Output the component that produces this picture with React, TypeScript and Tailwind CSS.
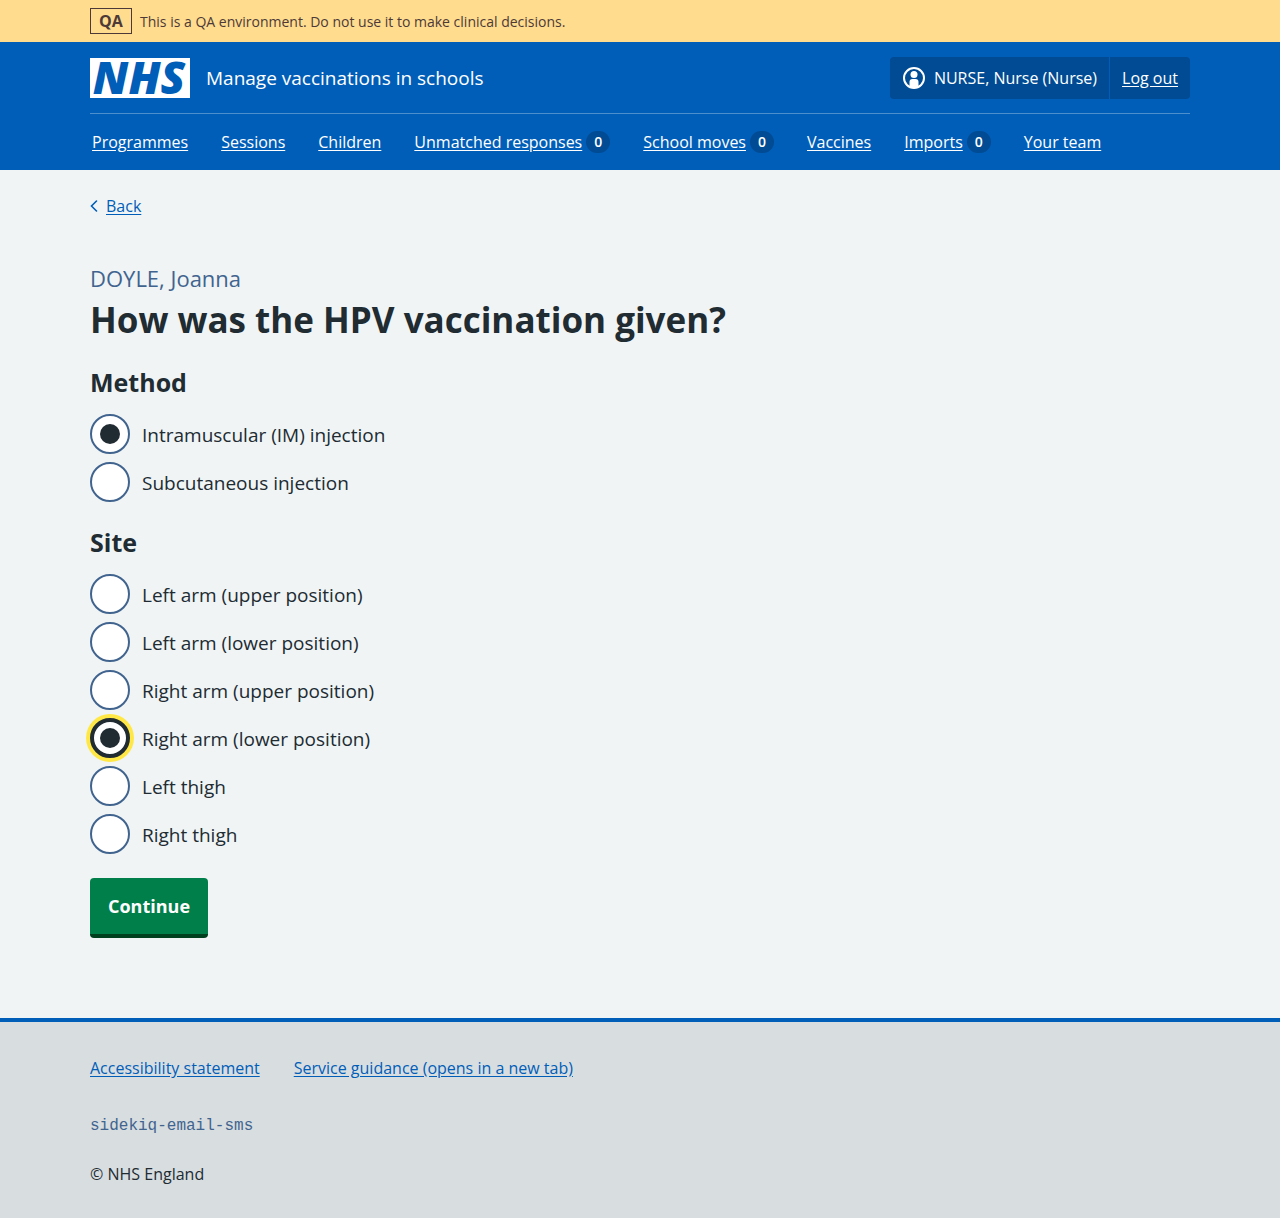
import { useState } from "react";

const navItems: { label: string; count?: number }[] = [
  { label: "Programmes" },
  { label: "Sessions" },
  { label: "Children" },
  { label: "Unmatched responses", count: 0 },
  { label: "School moves", count: 0 },
  { label: "Vaccines" },
  { label: "Imports", count: 0 },
  { label: "Your team" },
];

const methods = ["Intramuscular (IM) injection", "Subcutaneous injection"];

const sites = [
  "Left arm (upper position)",
  "Left arm (lower position)",
  "Right arm (upper position)",
  "Right arm (lower position)",
  "Left thigh",
  "Right thigh",
];

function EnvironmentBanner() {
  return (
    <div className="bg-[#ffdc8e] px-8 text-[#4d3a38]">
      <div className="mx-auto flex min-h-[42px] max-w-[1100px] items-center gap-2">
        <strong className="flex h-[26px] w-[42px] items-center justify-center border border-[#4d3a38] text-base font-bold">
          QA
        </strong>
        <span className="pt-0.5 text-sm">This is a QA environment. Do not use it to make clinical decisions.</span>
      </div>
    </div>
  );
}

function Logo() {
  return (
    <svg viewBox="0 0 100 40" className="h-10 w-[100px] overflow-visible" role="img" aria-label="NHS">
      <rect width="100" height="40" fill="#fff" />
      <text
        x="49"
        y="36"
        textAnchor="middle"
        fill="#005eb8"
        fontFamily="'Open Sans', sans-serif"
        fontSize="45"
        fontWeight="800"
        fontStyle="italic"
      >
        NHS
      </text>
    </svg>
  );
}

function UserIcon() {
  return (
    <svg viewBox="0 0 24 24" className="size-6" aria-hidden="true">
      <circle cx="12" cy="12" r="10" fill="none" stroke="#fff" strokeWidth="2" />
      <circle cx="12" cy="8.5" r="3.500" fill="#fff" />
      <path d="M7.500 21v-5a3 3 0 0 1 3-3h3a3 3 0 0 1 3 3v5a10 10 0 0 1-9 0Z" fill="#fff" />
    </svg>
  );
}

function Header() {
  return (
    <header className="bg-[#005eb8] px-8 text-white">
      <div className="mx-auto max-w-[1100px]">
        <div className="flex min-h-[72px] items-center justify-between border-b border-[#4d8ecd]">
          <a href="#" className="flex items-center gap-4">
            <Logo />
            <span className="text-[19px] leading-7">Manage vaccinations in schools</span>
          </a>
          <div className="flex h-[42px] items-stretch rounded bg-[#004b93]">
            <span className="flex items-center gap-2 border-r border-[#005eb8] px-3">
              <UserIcon />
              NURSE, Nurse (Nurse)
            </span>
            <a href="#" className="flex items-center px-3 underline underline-offset-2">
              Log out
            </a>
          </div>
        </div>
        <nav>
          <ul className="flex h-14 items-center gap-[33px] px-0.5">
            {navItems.map((item) => (
              <li key={item.label} className="flex items-center gap-1 whitespace-nowrap">
                <a href="#" className="underline underline-offset-2">
                  {item.label}
                </a>
                {item.count !== undefined && (
                  <span className="flex h-[22px] w-6 items-center justify-center rounded-full bg-[#004b93] text-sm font-semibold">
                    {item.count}
                  </span>
                )}
              </li>
            ))}
          </ul>
        </nav>
      </div>
    </header>
  );
}

function RadioGroup(props: {
  legend: string;
  name: string;
  options: string[];
  value: string;
  onChange: (value: string) => void;
  focused?: string;
}) {
  return (
    <fieldset className="mb-6">
      <legend className="mb-4 text-[25px] font-bold leading-8">{props.legend}</legend>
      <div className="flex flex-col gap-2">
        {props.options.map((option) => (
          <label key={option} className="flex w-fit cursor-pointer items-center gap-3 text-[19px] leading-7">
            <input
              type="radio"
              name={props.name}
              autoFocus={option === props.focused}
              checked={props.value === option}
              onChange={() => props.onChange(option)}
              className="grid size-10 shrink-0 appearance-none place-items-center rounded-full border-2 border-[#41648f] bg-white outline-none before:size-5 before:rounded-full checked:before:bg-[#212b32] focus:border-4 focus:border-[#212b32] focus:ring-4 focus:ring-[#ffe846]"
            />
            <span className="pt-0.5">{option}</span>
          </label>
        ))}
      </div>
    </fieldset>
  );
}

export default function App() {
  const [method, setMethod] = useState(methods[0]);
  const [site, setSite] = useState(sites[3]);

  return (
    <div className="min-h-screen bg-[#f0f4f5] font-['Open_Sans',sans-serif] text-base text-[#212b32]">
      <EnvironmentBanner />
      <Header />
      <div className="px-8">
        <div className="mx-auto max-w-[1100px]">
          <a href="#" className="mt-6 inline-flex items-center gap-2 text-[#005eb8]">
            <svg viewBox="0 0 8 12" className="h-3 w-2" aria-hidden="true">
              <path d="M6.500 1 1.500 6l5 5" fill="none" stroke="currentColor" strokeWidth="1.600" strokeLinecap="round" />
            </svg>
            <span className="underline underline-offset-2">Back</span>
          </a>
          <main className="pt-11">
            <h1 className="mb-5 text-[35px] font-bold leading-[52px]">
              <span className="block text-[22px] font-normal leading-8 text-[#41648f]">DOYLE, Joanna</span>
              How was the HPV vaccination given?
            </h1>
            <form onSubmit={(event) => event.preventDefault()}>
              <RadioGroup legend="Method" name="method" options={methods} value={method} onChange={setMethod} />
              <RadioGroup
                legend="Site"
                name="site"
                options={sites}
                value={site}
                onChange={setSite}
                focused={sites[3]}
              />
              <button
                type="submit"
                className="mb-20 block h-[60px] rounded border-b-4 border-[#00401e] bg-[#007f4a] px-[18px] text-lg font-bold text-white"
              >
                Continue
              </button>
            </form>
          </main>
        </div>
      </div>
      <footer className="border-t-4 border-[#005eb8] bg-[#d8dde0] px-8 pb-8 pt-[34px]">
        <div className="mx-auto max-w-[1100px]">
          <ul className="flex flex-wrap gap-[34px] text-[#005eb8]">
            <li>
              <a href="#" className="underline underline-offset-2">
                Accessibility statement
              </a>
            </li>
            <li>
              <a href="#" className="underline underline-offset-2">
                Service guidance (opens in a new tab)
              </a>
            </li>
          </ul>
          <p className="mt-[34px] font-['Liberation_Mono',monospace] text-[#41648f]">sidekiq-email-sms</p>
          <p className="mt-6">© NHS England</p>
        </div>
      </footer>
    </div>
  );
}
